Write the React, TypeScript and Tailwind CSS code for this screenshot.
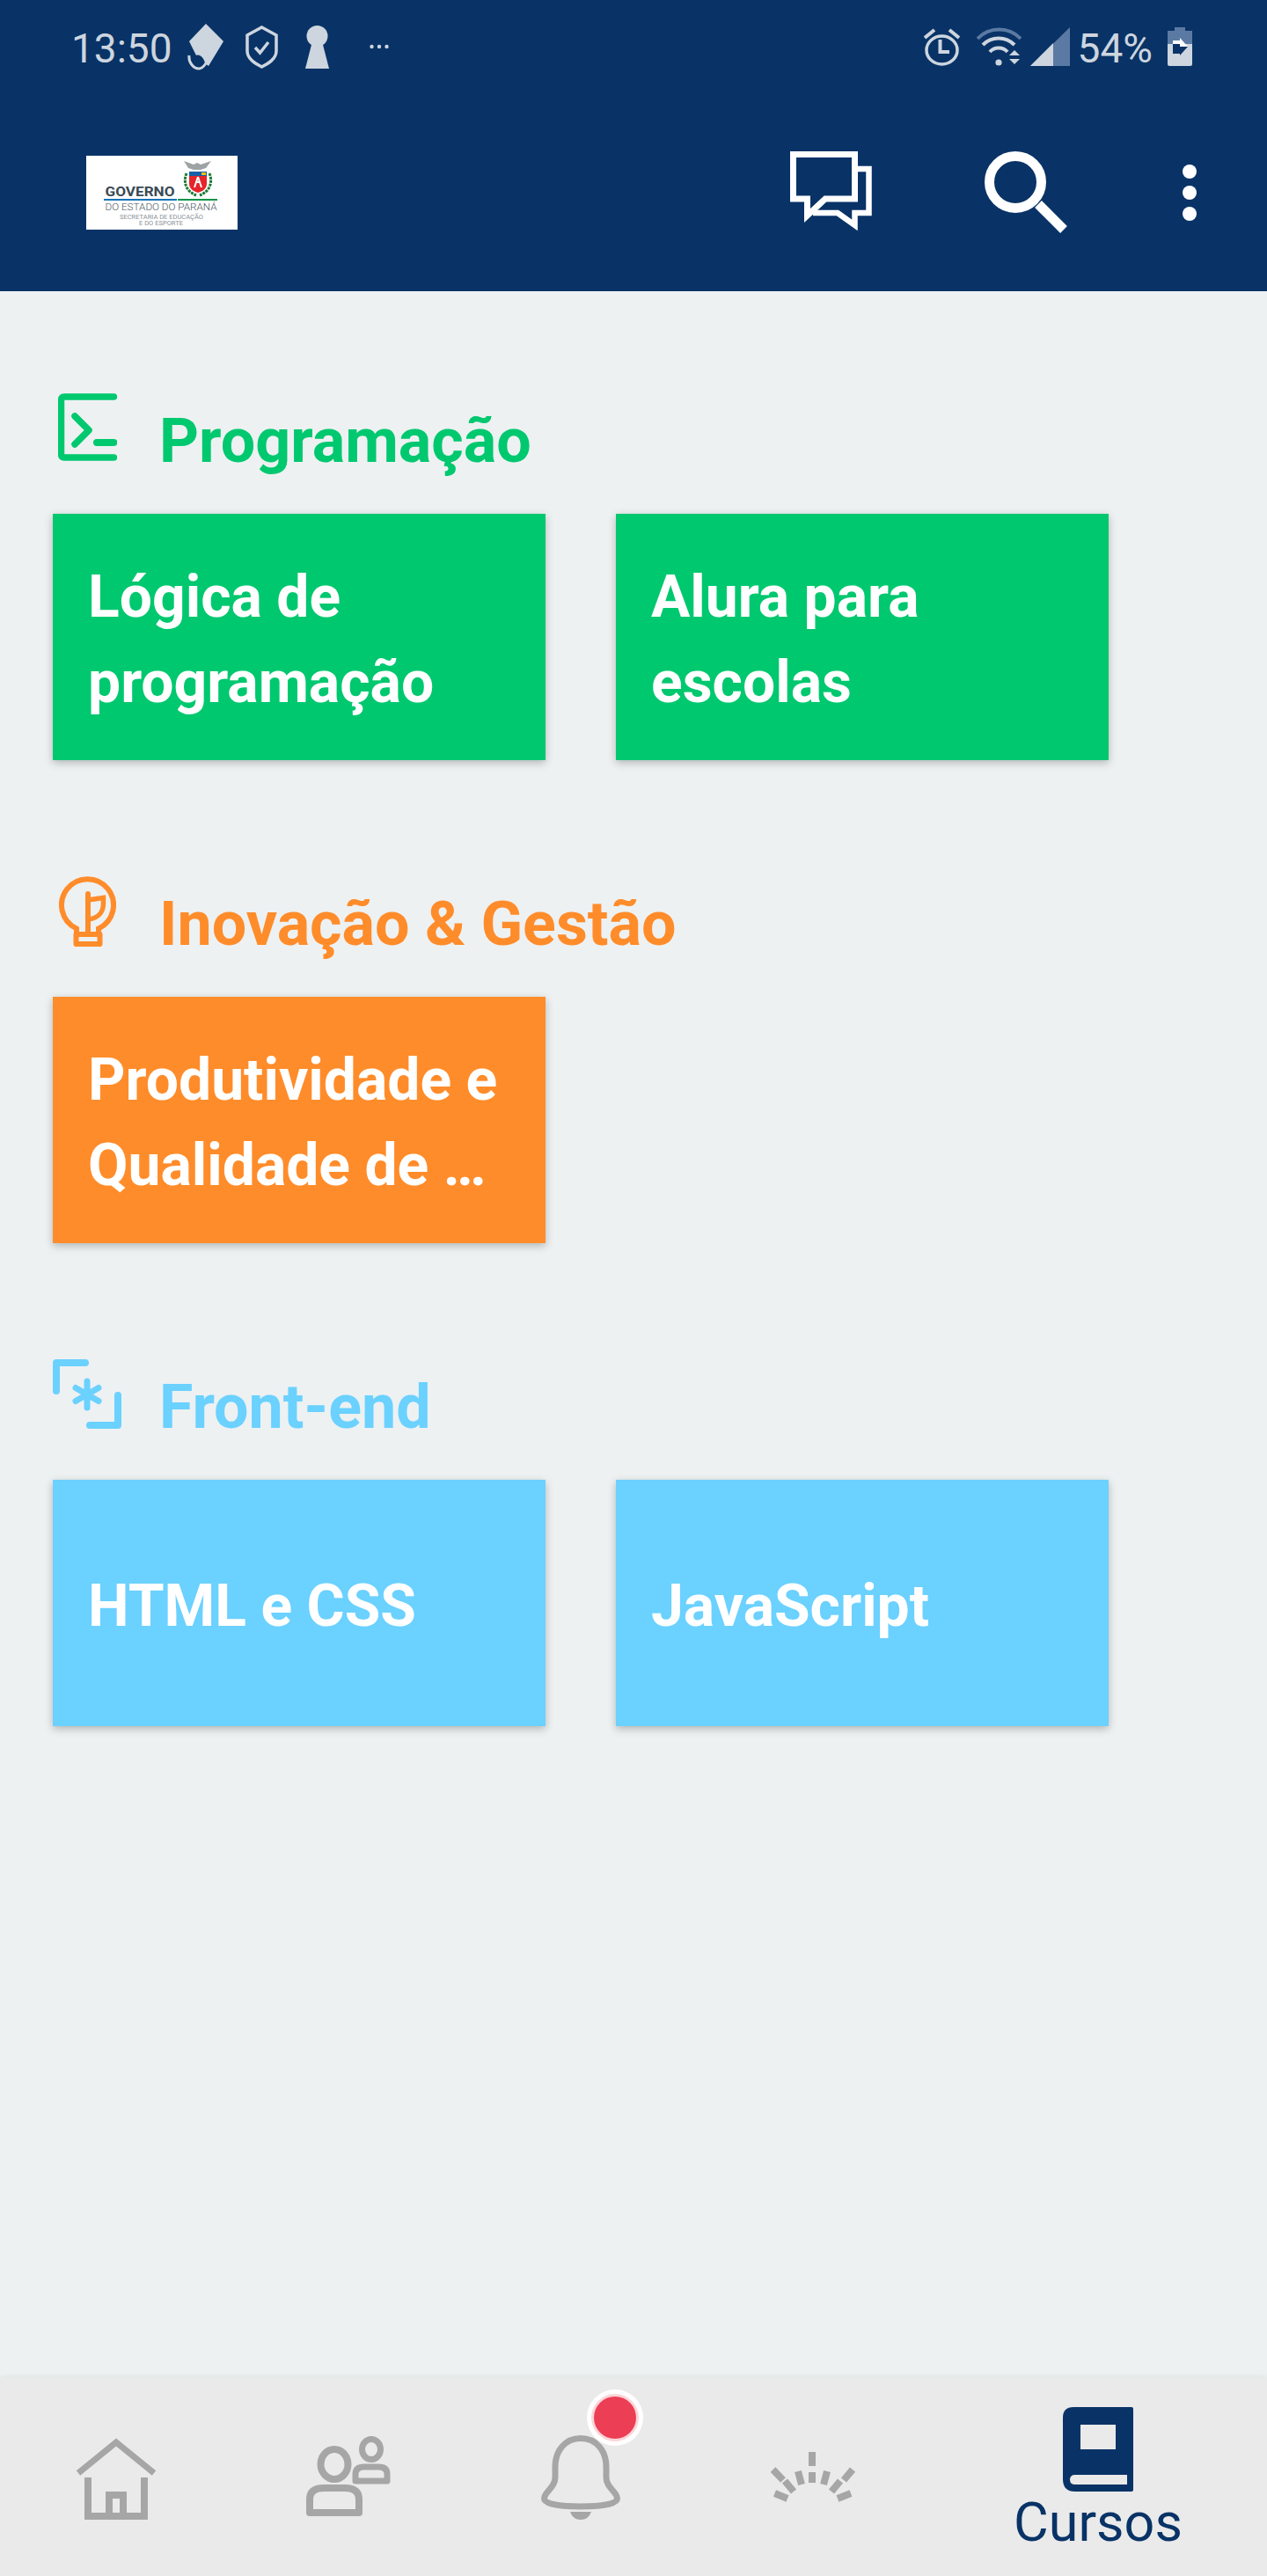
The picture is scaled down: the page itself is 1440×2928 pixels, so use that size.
import React from "react";

const STATUS = "#cdd5df";
const DIM = "#5b7aa3";
const NAVY = "#093366";
const GREY = "#a6a6a6";

function Diamond() {
  return (
    <svg width="41" height="53" viewBox="0 0 41 53" className="mt-0 ml-[19px]">
      <path d="M21 0L41 20L24 48L20 45C19 39 14 34 10 36L2 20Z" fill={STATUS} />
      <path d="M2 36C1 44 7 51 13 51C17 51 19 48 21 45" fill="none" stroke={STATUS} strokeWidth="3" />
    </svg>
  );
}
function Shield() {
  return (
    <svg width="37" height="49" viewBox="0 0 37 49" className="mt-[2px] ml-[25px]">
      <path d="M18.5 2L35 11V29C35 38 26 43 18.5 47C11 43 2 38 2 29V11Z" fill="none" stroke={STATUS} strokeWidth="3.5" />
      <path d="M11 25L16.5 31L26 19" fill="none" stroke={STATUS} strokeWidth="3.5" />
    </svg>
  );
}
function Keyhole() {
  return (
    <svg width="27" height="49" viewBox="0 0 27 49" className="mt-[2px] ml-[31px]">
      <ellipse cx="13.5" cy="12" rx="12" ry="12" fill={STATUS} />
      <path d="M8 18H19L27 49H0Z" fill={STATUS} />
    </svg>
  );
}
function Dots3() {
  return (
    <svg width="22" height="6" viewBox="0 0 22 6" className="mt-[23px] ml-[46px]">
      <circle cx="2.5" cy="3" r="2.2" fill={STATUS} />
      <circle cx="11" cy="3" r="2.2" fill={STATUS} />
      <circle cx="19.5" cy="3" r="2.2" fill={STATUS} />
    </svg>
  );
}
function Alarm() {
  return (
    <svg width="41" height="43" viewBox="0 0 41 43" className="mt-[5px]">
      <ellipse cx="20.5" cy="25" rx="17.5" ry="16" fill="none" stroke={STATUS} strokeWidth="3.5" />
      <path d="M18.5 13V27H29" fill="none" stroke={STATUS} strokeWidth="4" />
      <path d="M1 11L12 2M29 2L40 11" fill="none" stroke={STATUS} strokeWidth="4" />
    </svg>
  );
}
function Wifi() {
  return (
    <svg width="51" height="44" viewBox="0 0 51 44" className="mt-[4px] ml-[19px]">
      <path d="M1 13C14 -1 37 -1 50 13" fill="none" stroke={DIM} strokeWidth="4" />
      <path d="M7 20C17 10 33 10 43 20" fill="none" stroke={STATUS} strokeWidth="4" />
      <path d="M15 28C20 22 30 22 35 28" fill="none" stroke={STATUS} strokeWidth="4" />
      <circle cx="25" cy="40" r="3.6" fill={STATUS} />
      <path d="M43 26L49 32H37Z" fill={STATUS} />
      <path d="M37 36H49L43 42Z" fill={STATUS} />
    </svg>
  );
}
function Signal() {
  return (
    <svg width="45" height="44" viewBox="0 0 45 44" className="mt-[4px] ml-[10px]">
      <path d="M45 0V44H0Z" fill={DIM} />
      <path d="M0 44L26 18V44Z" fill={STATUS} />
    </svg>
  );
}
function Battery() {
  return (
    <svg width="28" height="44" viewBox="0 0 28 44" className="mt-[4px] ml-[17px]">
      <path d="M8 0H20V4H28V19H0V4H8Z" fill={DIM} />
      <path d="M0 19H28V42Q28 44 26 44H2Q0 44 0 42Z" fill={STATUS} />
      <path d="M6 19V15H14V19Z" fill="#ffffff" />
      <path d="M14 12L23 22H14Z" fill="#ffffff" />
      <path d="M6 19H14V30H6Z" fill={NAVY} />
      <path d="M14 22H23L14 32Z" fill={NAVY} />
    </svg>
  );
}
function Logo() {
  return (
    <svg width="172" height="84" viewBox="0 0 172 84" className="ml-[98px] mt-[2px] bg-white shrink-0">
      <text x="21.5" y="46" fontFamily="Roboto" fontWeight="700" fontSize="15.5" fill="#3a4a55" textLength="79" lengthAdjust="spacingAndGlyphs">GOVERNO</text>
      <rect x="20" y="49" width="83" height="2" fill="#1273b8" />
      <rect x="104" y="49" width="45" height="2" fill="#0a9447" />
      <text x="21.5" y="61.5" fontFamily="Roboto" fontWeight="300" fontSize="10.5" fill="#4a565e" textLength="127" lengthAdjust="spacingAndGlyphs">DO ESTADO DO PARANÁ</text>
      <text x="38" y="72" fontFamily="Roboto" fontSize="6.5" fill="#8a9298" textLength="95" lengthAdjust="spacingAndGlyphs">SECRETARIA DE EDUCAÇÃO</text>
      <text x="60" y="79" fontFamily="Roboto" fontSize="6.5" fill="#8a9298" textLength="50" lengthAdjust="spacingAndGlyphs">E DO ESPORTE</text>
      <path d="M111 6L122 10L126 8L130 10L142 6L136 14L130 16H122L116 14Z" fill="#9ea3a3" />
      <path d="M117 18H137V32C137 38 131 41 127 42C123 41 117 38 117 32Z" fill="#e5252a" />
      <rect x="117" y="18" width="20" height="5" fill="#1560a8" />
      <rect x="131" y="19" width="5" height="3" fill="#f1c40f" />
      <path d="M127 24L123 36M127 24L131 36M125 30H129" stroke="#ffffff" strokeWidth="2" fill="none" />
      <path d="M114 20C110 30 113 40 125 45M140 20C144 30 141 40 129 45" stroke="#1d7a35" strokeWidth="3" strokeDasharray="3 1" fill="none" />
    </svg>
  );
}
function Chat() {
  return (
    <svg width="93" height="92" viewBox="0 0 93 92" className="ml-auto shrink-0">
      <path d="M3.5 3.5H73.5V54H40L19.5 73V54H3.5Z" fill="none" stroke="#fff" strokeWidth="7" />
      <path d="M77 20H89.5V70H73.5V84L54 70H26" fill="none" stroke="#fff" strokeWidth="6.5" />
    </svg>
  );
}
function Search() {
  return (
    <svg width="95" height="93" viewBox="0 0 95 93" className="ml-[128px] shrink-0">
      <circle cx="35" cy="35" r="29.5" fill="none" stroke="#fff" strokeWidth="11" />
      <path d="M61 60L90 89" stroke="#fff" strokeWidth="11" />
    </svg>
  );
}
function More() {
  return (
    <svg width="16" height="64" viewBox="0 0 16 64" className="ml-[130px] mr-[80px] mt-[2px] shrink-0">
      <circle cx="8" cy="8" r="8" fill="#fff" />
      <circle cx="8" cy="32" r="8" fill="#fff" />
      <circle cx="8" cy="56" r="8" fill="#fff" />
    </svg>
  );
}
function TerminalIcon() {
  const c = "#00c86f";
  return (
    <svg width="67" height="77" viewBox="0 0 67 77" className="ml-[6px] mt-[13px]">
      <path d="M63.5 4H8Q3.5 4 3.5 8V69Q3.5 73 8 73H63.5" fill="none" stroke={c} strokeWidth="7.5" strokeLinecap="round" />
      <path d="M19 26L35 42L19 58" fill="none" stroke={c} strokeWidth="7.5" strokeLinecap="round" strokeLinejoin="round" />
      <path d="M44 56H63.5" fill="none" stroke={c} strokeWidth="8" strokeLinecap="round" />
    </svg>
  );
}
function BulbIcon() {
  const c = "#ff8c2a";
  return (
    <svg width="65" height="80" viewBox="0 0 65 80" className="ml-[7px] mt-[13px]">
      <path d="M20 66V59.5A29.5 29.5 0 1 1 45 59.5V66" fill="none" stroke={c} strokeWidth="6" />
      <rect x="19.5" y="66" width="27" height="11" fill="none" stroke={c} strokeWidth="6" strokeLinejoin="round" />
      <path d="M33 20V64" fill="none" stroke={c} strokeWidth="6" strokeLinecap="round" />
      <path d="M33 27L50.5 24.5V31C50.5 42 43 48 33 49" fill="none" stroke={c} strokeWidth="5.5" />
    </svg>
  );
}
function FrontIcon() {
  const c = "#6bd1ff";
  return (
    <svg width="78" height="79" viewBox="0 0 78 79" className="mt-[13px]">
      <path d="M37 4H4V36" fill="none" stroke={c} strokeWidth="8" strokeLinecap="round" strokeLinejoin="round" />
      <path d="M42 75H74V41" fill="none" stroke={c} strokeWidth="8" strokeLinecap="round" strokeLinejoin="round" />
      <path d="M39 25V55M26 32.5L52 47.5M52 32.5L26 47.5" fill="none" stroke={c} strokeWidth="7" strokeLinecap="round" />
    </svg>
  );
}
function HomeIcon() {
  return (
    <svg width="92" height="93" viewBox="0 0 92 93" className="ml-[86px] mt-[68px]">
      <path d="M3 40L46 5L89 40" fill="none" stroke={GREY} strokeWidth="7" />
      <path d="M14 45V89H78V45" fill="none" stroke={GREY} strokeWidth="8" />
      <path d="M38 89V65H54V89" fill="none" stroke={GREY} strokeWidth="8" />
    </svg>
  );
}
function PeopleIcon() {
  return (
    <svg width="96" height="91" viewBox="0 0 96 91" className="ml-[84px] mt-[66px]">
      <ellipse cx="32" cy="32" rx="15.5" ry="17" fill="none" stroke={GREY} strokeWidth="8" />
      <path d="M4 87V72Q4 59 20 59H44Q60 59 60 72V87Z" fill="none" stroke={GREY} strokeWidth="8" strokeLinejoin="round" />
      <ellipse cx="74" cy="15" rx="10.5" ry="11.5" fill="none" stroke={GREY} strokeWidth="7" />
      <path d="M56 51V43Q56 35 66 35H82Q92 35 92 43V51Z" fill="none" stroke={GREY} strokeWidth="7" strokeLinejoin="round" />
    </svg>
  );
}
function BellIcon() {
  return (
    <svg width="90" height="96" viewBox="0 0 90 96" className="ml-[87px] mt-[65px]">
      <path d="M45 3.5C27 3.5 16 18 16 36V48C16 60 3.5 64 3.5 72C3.5 78 20 81 45 81C70 81 86.5 78 86.5 72C86.5 64 74 60 74 48V36C74 18 63 3.5 45 3.5Z" fill="none" stroke={GREY} strokeWidth="7" />
      <path d="M33 87H57Q54 96 45 96Q36 96 33 87Z" fill={GREY} />
    </svg>
  );
}
function LightIcon() {
  return (
    <svg width="96" height="57" viewBox="0 0 96 57" className="ml-[84px] mt-[84px]">
      <path d="M47 0V16M47 23V35M2.5 20L14 32M93 20L83 32M31 22L35 37M64 22L60 37M16 33L26 45M79 33L69 45M4.5 47L19 53M91 47L76 53" fill="none" stroke={GREY} strokeWidth="8" />
    </svg>
  );
}
function BookIcon() {
  return (
    <svg width="80" height="96" viewBox="0 0 80 96" className="mt-[33px]">
      <path d="M12 0H78Q80 0 80 2V94Q80 96 78 96H14Q0 96 0 82V12Q0 0 12 0Z" fill={NAVY} />
      <rect x="20" y="20" width="40" height="28" fill="#eaeaea" />
      <path d="M14 77H73V88H14Q8 88 8 82.5Q8 77 14 77Z" fill="#eaeaea" />
    </svg>
  );
}

function Card({ bg, lines }: { bg: string; lines: string[] }) {
  return (
    <div className={`w-[560px] h-[280px] flex flex-col justify-center pl-[40px] pt-[6px] text-white font-bold text-[66px] leading-[97px] shadow-[0_3px_9px_rgba(0,0,0,0.25)] ${bg}`}>
      {lines.map((l) => (
        <div key={l} className="whitespace-nowrap">{l}</div>
      ))}
    </div>
  );
}

export default function App() {
  return (
    <div className="w-[1440px] h-[2928px] flex flex-col bg-[#edf1f2] overflow-hidden font-['Roboto',sans-serif]">
      <header className="h-[331px] bg-[#093366] flex flex-col shrink-0">
        <div className="h-[105px] pt-[27px] flex items-start">
          <span className="ml-[81px] w-[113px] mt-[9px] text-[46px] leading-[38px] text-[#cdd5df]">13:50</span>
          <Diamond />
          <Shield />
          <Keyhole />
          <Dots3 />
          <div className="ml-auto mr-[85px] flex items-start">
            <Alarm />
            <Wifi />
            <Signal />
            <span className="ml-[9px] mt-[9px] text-[46px] leading-[38px] text-[#cdd5df]">54%</span>
            <Battery />
          </div>
        </div>
        <div className="h-[226px] flex items-center">
          <Logo />
          <Chat />
          <Search />
          <More />
        </div>
      </header>

      <main className="flex-1 pl-[60px] pt-[103px] flex flex-col gap-[119px]">
        <section>
          <div className="h-[150px] flex items-start">
            <div className="w-[121px]"><TerminalIcon /></div>
            <h2 className="mt-[29px] text-[70px] leading-[76px] font-bold text-[#00c86f]">Programação</h2>
          </div>
          <div className="flex gap-[80px]">
            <Card bg="bg-[#00c86f]" lines={["Lógica de", "programação"]} />
            <Card bg="bg-[#00c86f]" lines={["Alura para", "escolas"]} />
          </div>
        </section>
        <section>
          <div className="h-[150px] flex items-start">
            <div className="w-[121px]"><BulbIcon /></div>
            <h2 className="mt-[29px] text-[70px] leading-[76px] font-bold text-[#ff8c2a]">Inovação &amp; Gestão</h2>
          </div>
          <div className="flex gap-[80px]">
            <Card bg="bg-[#ff8c2a]" lines={["Produtividade e", "Qualidade de …"]} />
          </div>
        </section>
        <section>
          <div className="h-[150px] flex items-start">
            <div className="w-[121px]"><FrontIcon /></div>
            <h2 className="mt-[29px] text-[70px] leading-[76px] font-bold text-[#6bd1ff]">Front-end</h2>
          </div>
          <div className="flex gap-[80px]">
            <Card bg="bg-[#6bd1ff]" lines={["HTML e CSS"]} />
            <Card bg="bg-[#6bd1ff]" lines={["JavaScript"]} />
          </div>
        </section>
      </main>

      <nav className="h-[225px] shrink-0 bg-[#eaeaea] grid grid-cols-[264px_264px_264px_264px_384px] shadow-[0_-2px_6px_rgba(0,0,0,0.05)]">
        <div><HomeIcon /></div>
        <div><PeopleIcon /></div>
        <div className="relative">
          <BellIcon />
          <span className="absolute left-[147px] top-[21px] w-[48px] h-[48px] rounded-full bg-[#ec3e54] shadow-[0_0_0_3px_#fbd5da,0_0_0_8px_#ffffff]" />
        </div>
        <div><LightIcon /></div>
        <div className="flex flex-col items-center">
          <BookIcon />
          <span className="text-[61px] leading-[70px] text-[#093366]">Cursos</span>
        </div>
      </nav>
    </div>
  );
}
